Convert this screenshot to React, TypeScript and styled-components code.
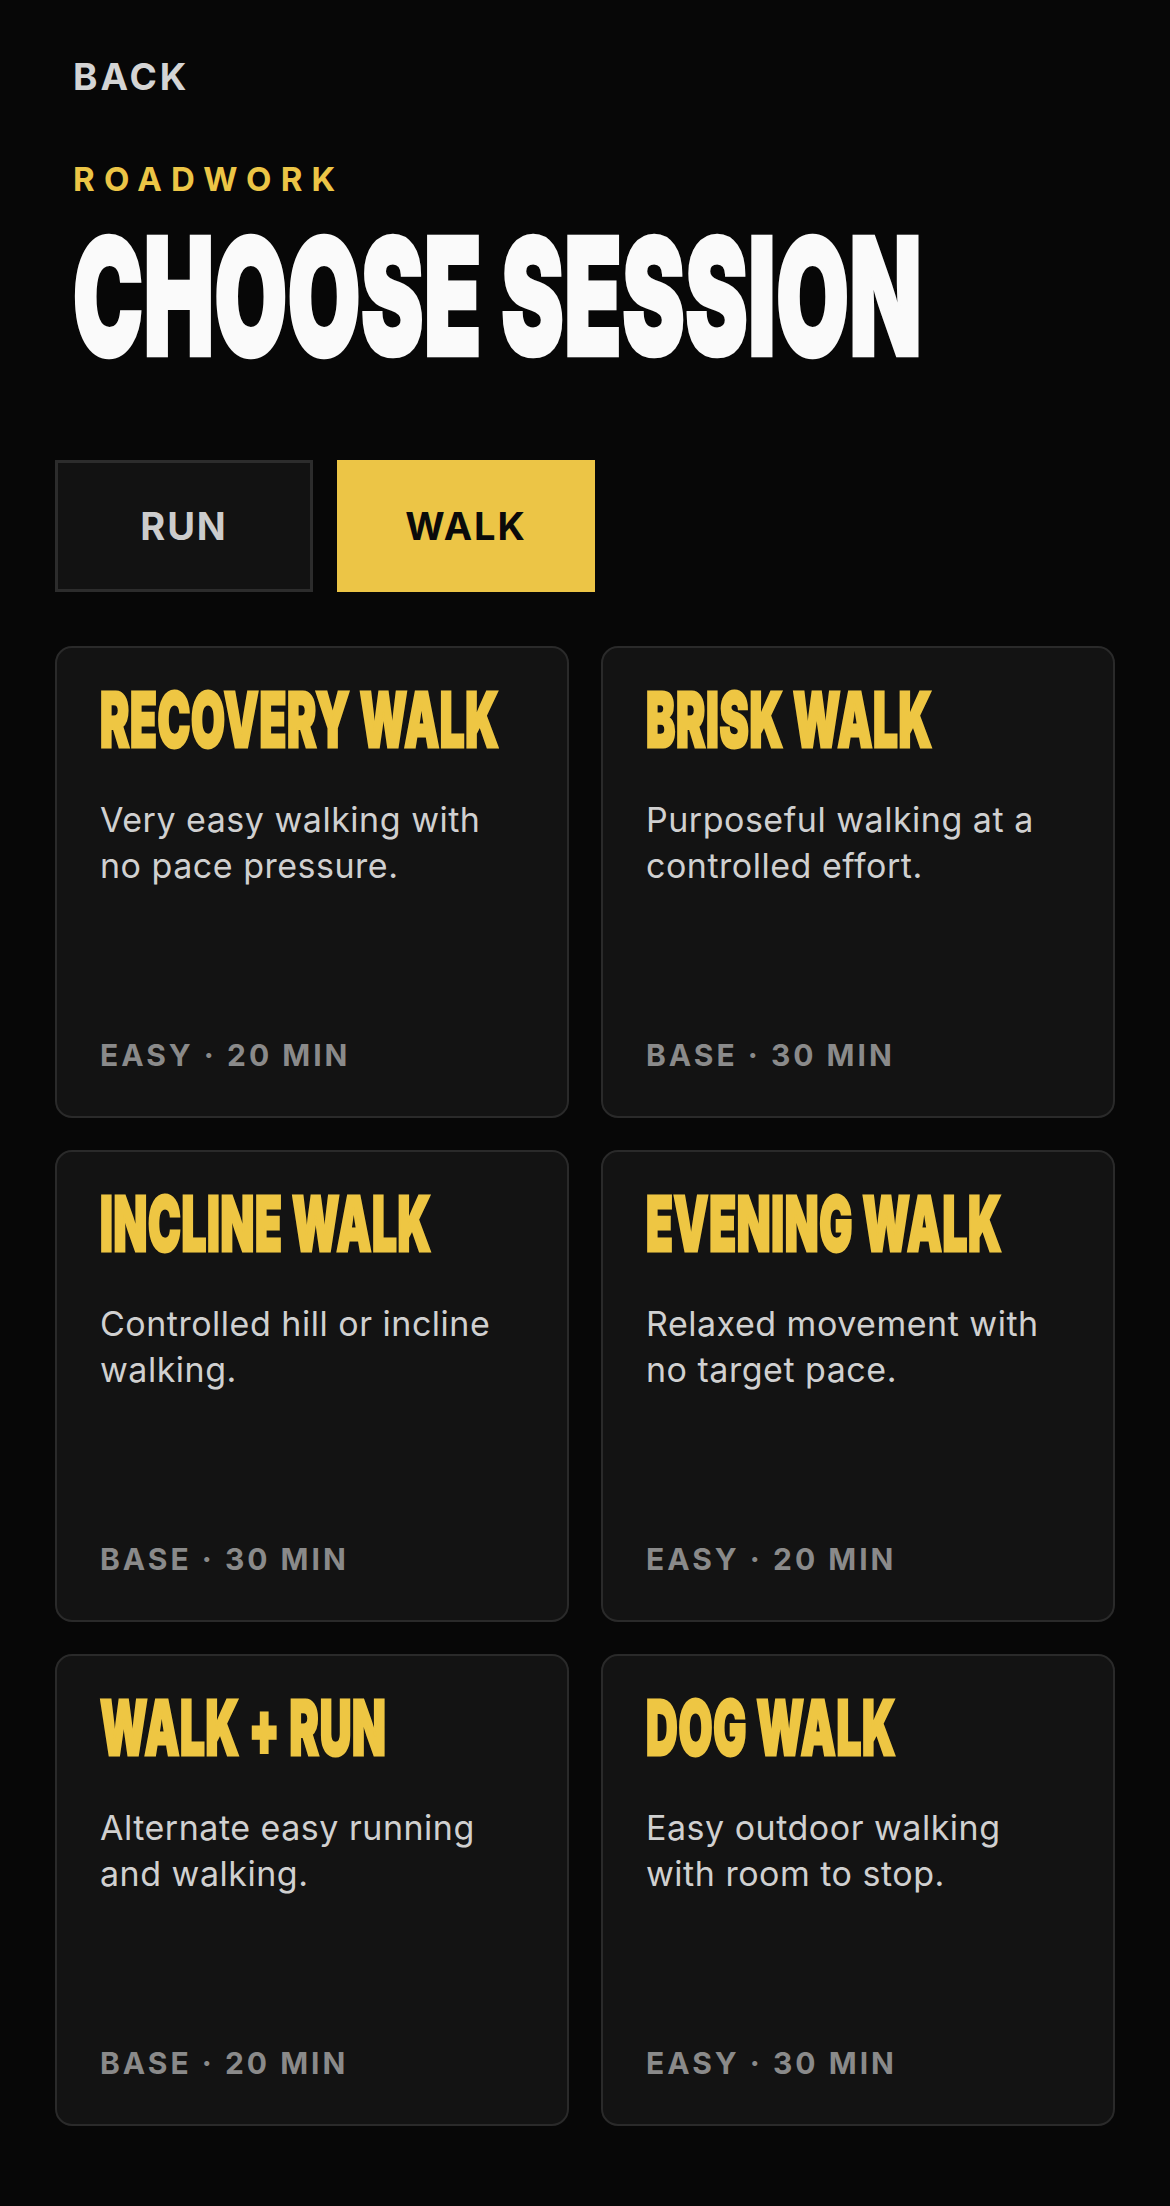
import styled, { createGlobalStyle } from "styled-components";

interface Session {
  /** Session name, shown in the display face */
  title: string;
  /** Short description of the session */
  description: string;
  /** Intensity label */
  level: string;
  /** Duration in minutes */
  minutes: number;
}

const walkSessions: Session[] = [
  { title: "RECOVERY WALK", description: "Very easy walking with no pace pressure.", level: "EASY", minutes: 20 },
  { title: "BRISK WALK", description: "Purposeful walking at a controlled effort.", level: "BASE", minutes: 30 },
  { title: "INCLINE WALK", description: "Controlled hill or incline walking.", level: "BASE", minutes: 30 },
  { title: "EVENING WALK", description: "Relaxed movement with no target pace.", level: "EASY", minutes: 20 },
  { title: "WALK + RUN", description: "Alternate easy running and walking.", level: "BASE", minutes: 20 },
  { title: "DOG WALK", description: "Easy outdoor walking with room to stop.", level: "EASY", minutes: 30 },
];

const GlobalStyle = createGlobalStyle`
  html, body {
    margin: 0;
    padding: 0;
    background: #070707;
  }
  body {
    font-family: Inter, "Noto Sans", sans-serif;
    -webkit-font-smoothing: antialiased;
  }
`;

/**
 * Session picker for the roadwork section, walk tab selected
 */
const App = () => {
  return (
    <>
      <GlobalStyle />
      <Page>
        <Header>
          <BackLink>BACK</BackLink>
          <Eyebrow>ROADWORK</Eyebrow>
          <PageTitle>
            <Condensed $size={162} $ratio={0.578}>
              CHOOSE SESSION
            </Condensed>
          </PageTitle>
        </Header>

        <Tabs>
          <Tab>RUN</Tab>
          <Tab $active>WALK</Tab>
        </Tabs>

        <SessionGrid>
          {walkSessions.map((session) => (
            <SessionCard key={session.title}>
              <CardTitle>
                <Condensed $size={75} $ratio={0.585}>
                  {session.title}
                </Condensed>
              </CardTitle>
              <CardText>{session.description}</CardText>
              <CardMeta>
                {session.level} · {session.minutes} MIN
              </CardMeta>
            </SessionCard>
          ))}
        </SessionGrid>
      </Page>
    </>
  );
};

export default App;

const Page = styled.div`
  min-height: 2206px;
  box-sizing: border-box;
  padding: 55px 55px 80px;
  background: #070707;
`;

const Header = styled.header`
  display: flex;
  flex-direction: column;
  align-items: flex-start;
  padding: 0 18px;
`;

const BackLink = styled.div`
  font-size: 37px;
  line-height: 1.2;
  font-weight: 700;
  letter-spacing: 0.08em;
  color: #d4d4d4;
  cursor: pointer;
`;

const Eyebrow = styled.div`
  margin-top: 61px;
  font-size: 33px;
  line-height: 1.2;
  font-weight: 700;
  letter-spacing: 0.28em;
  color: #ecc546;
`;

const PageTitle = styled.h1`
  margin: 17px 0 0;
  font-weight: 900;
  letter-spacing: 0.02em;
  color: #fafafa;
  -webkit-text-stroke: 2.6px #fafafa;
`;

/**
 * Narrow, tall display lettering: the face is set at the condensed width
 * and stretched upwards to the wanted cap height
 */
const Condensed = styled.span<{ $size: number; $ratio: number }>`
  display: block;
  width: fit-content;
  white-space: nowrap;
  font-size: ${(props) => props.$size * props.$ratio}px;
  line-height: 1;
  transform: scaleY(${(props) => 1 / props.$ratio});
  transform-origin: left top;
  margin-bottom: ${(props) => props.$size * (1 - props.$ratio)}px;
`;

const Tabs = styled.div`
  display: flex;
  gap: 24px;
  margin-top: 81px;
`;

const Tab = styled.button<{ $active?: boolean }>`
  width: 258px;
  height: 132px;
  box-sizing: border-box;
  display: flex;
  align-items: center;
  justify-content: center;
  padding: 0;
  border: 3px solid ${(props) => (props.$active ? "#ecc546" : "#2c2c2c")};
  background: ${(props) => (props.$active ? "#ecc546" : "#121212")};
  color: ${(props) => (props.$active ? "#0a0a0a" : "#cccccc")};
  font-family: Inter, "Noto Sans", sans-serif;
  font-size: 38px;
  font-weight: 700;
  letter-spacing: 0.05em;
  cursor: pointer;
`;

const SessionGrid = styled.div`
  display: grid;
  grid-template-columns: 1fr 1fr;
  gap: 32px;
  margin-top: 54px;
`;

const SessionCard = styled.div`
  height: 472px;
  box-sizing: border-box;
  display: flex;
  flex-direction: column;
  padding: 36px 43px 43px;
  border: 2px solid #2a2a2a;
  border-radius: 17px;
  background: #131313;
  cursor: pointer;
`;

const CardTitle = styled.h2`
  margin: 0;
  font-weight: 900;
  letter-spacing: 0.03em;
  color: #eec643;
  -webkit-text-stroke: 1.75px #eec643;
`;

const CardText = styled.p`
  margin: 38px 0 0;
  font-size: 34px;
  line-height: 46.5px;
  letter-spacing: 0.015em;
  color: #d0d0d0;
`;

const CardMeta = styled.div`
  margin-top: auto;
  font-size: 30px;
  line-height: 1.2;
  font-weight: 700;
  letter-spacing: 0.1em;
  color: #8a8a8a;
`;
